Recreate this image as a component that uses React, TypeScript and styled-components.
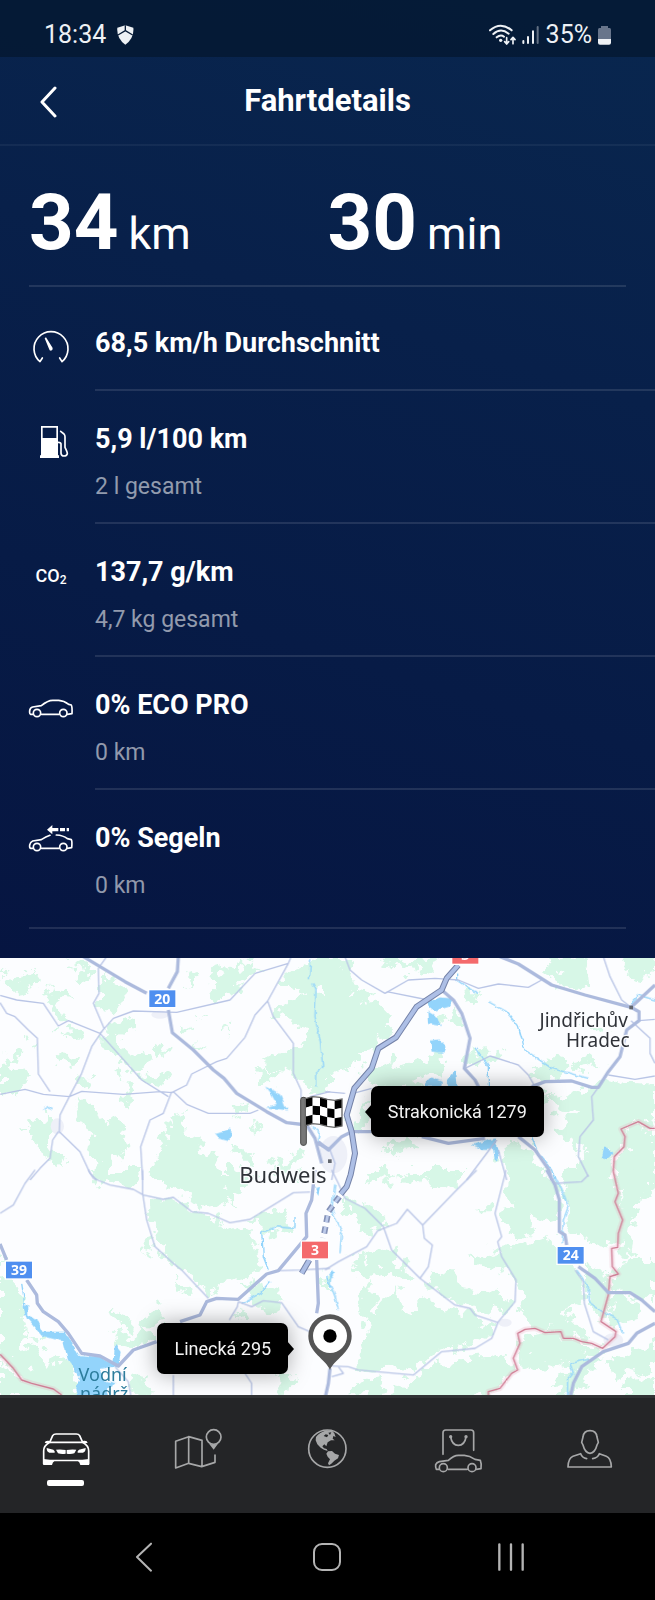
import React from 'react';
import styled, { createGlobalStyle } from 'styled-components';

const GlobalStyle = createGlobalStyle`
  *, *::before, *::after { box-sizing: border-box; }
  body {
    margin: 0;
    background: #000;
    color: #fff;
    font-family: Roboto, "Liberation Sans", sans-serif;
  }
`;

const line = 'rgba(255, 255, 255, 0.11)';

const Screen = styled.div`
  display: flex;
  flex-direction: column;
  min-height: 100vh;
`;

const Sheet = styled.div`
  background: linear-gradient(197deg, #09274f 0%, #08204a 35%, #071b46 65%, #061541 100%);
`;

const StatusBar = styled.div`
  display: flex;
  align-items: center;
  justify-content: space-between;
  height: 57px;
  padding: 13px 44px 0;
  background: rgba(4, 20, 40, 0.6);
  color: #eef1f5;
  font-size: 25px;
  line-height: 28px;
`;

const StatusGroup = styled.div<{ $gap: number }>`
  display: flex;
  align-items: center;
  gap: ${(p) => p.$gap}px;
`;

const Header = styled.header`
  display: grid;
  grid-template-columns: 56px 1fr 56px;
  align-items: center;
  height: 89px;
  padding: 0 20px;
  border-bottom: 2px solid rgba(255, 255, 255, 0.05);
`;

const BackButton = styled.button`
  display: flex;
  align-items: center;
  justify-content: center;
  height: 56px;
  padding: 2px 0 0;
  border: 0;
  background: none;
  color: #fff;
`;

const Title = styled.h1`
  margin: 0;
  font-size: 31px;
  line-height: 36px;
  font-weight: 700;
  text-align: center;
`;

const Summary = styled.section`
  display: grid;
  grid-template-columns: 1fr 1fr;
  margin: 0 29px;
  padding: 31px 0 5px;
  border-bottom: 2px solid ${line};
`;

const Figure = styled.p`
  display: flex;
  align-items: baseline;
  gap: 10px;
  margin: 0;
  font-size: 45px;
  line-height: 92px;
`;

const FigureValue = styled.strong`
  font-size: 78px;
  font-weight: 700;
`;

const DetailList = styled.ul`
  margin: 0;
  padding: 8px 0 0 28px;
  list-style: none;
`;

const DetailRow = styled.li`
  display: grid;
  grid-template-columns: 46px 1fr;
  gap: 21px;
`;

const IconSlot = styled.div`
  display: flex;
  align-items: center;
  justify-content: center;
  height: 40px;
  margin-top: 32px;
`;

const Formula = styled.span`
  font-size: 18px;
  line-height: 20px;
  font-weight: 500;

  sub {
    font-size: 12px;
    line-height: 12px;
    vertical-align: -2px;
  }
`;

const DetailBody = styled.div<{ $divided: boolean; $single: boolean }>`
  display: flex;
  flex-direction: column;
  gap: 17px;
  padding: 32px 0 ${(p) => (p.$single ? 30 : p.$divided ? 20 : 26)}px;
  border-bottom: ${(p) => (p.$divided ? `2px solid ${line}` : '0')};
`;

const DetailTitle = styled.h2`
  margin: 0;
  font-size: 27px;
  line-height: 32px;
  font-weight: 700;
`;

const DetailNote = styled.p`
  margin: 0;
  color: rgba(255, 255, 255, 0.56);
  font-size: 23px;
  line-height: 30px;
`;

const SheetEnd = styled.hr`
  height: 2px;
  margin: 0 29px;
  border: 0;
  background: ${line};
`;

const SheetFoot = styled.div`
  height: 29px;
`;

const MapView = styled.section`
  position: relative;
  aspect-ratio: 655 / 437;
  overflow: hidden;
`;

const MapDrawing = styled.svg`
  display: block;
  width: 100%;
  height: 100%;
`;

const Callout = styled.div<{ $side: 'left' | 'right' }>`
  position: absolute;
  top: ${(p) => (p.$side === 'left' ? '29.3%' : '83.5%')};
  ${(p) => (p.$side === 'left' ? 'left: 56.6%;' : 'right: 56%;')}
  padding: 0 17px;
  border-radius: 7px;
  background: #000;
  color: #f2f2f2;
  font-size: 18px;
  line-height: 51px;
  white-space: nowrap;
  box-shadow: 0 0 22px rgba(0, 0, 0, 0.35);

  &::after {
    content: '';
    position: absolute;
    top: 18px;
    ${(p) => (p.$side === 'left' ? 'left: -6px;' : 'right: -6px;')}
    border: solid transparent;
    border-width: 8px 0;
    ${(p) => (p.$side === 'left' ? 'border-right: 7px solid #000;' : 'border-left: 7px solid #000;')}
  }
`;

const TabBar = styled.nav`
  display: flex;
  height: 118px;
  border-top: 3px solid #303234;
  background: #242527;
`;

const Tab = styled.button<{ $active?: boolean }>`
  display: flex;
  flex: 1;
  flex-direction: column;
  align-items: center;
  gap: 5px;
  padding: 27px 0 0;
  border: 0;
  background: none;
  color: ${(p) => (p.$active ? '#fff' : '#a6a7a8')};

  &::after {
    content: '';
    width: 37px;
    height: 6px;
    border-radius: 2px;
    background: ${(p) => (p.$active ? '#fff' : 'transparent')};
  }
`;

const SystemBar = styled.nav`
  display: flex;
  flex: 1;
  align-items: center;
  justify-content: center;
  min-height: 87px;
`;

const SystemButton = styled.button`
  display: flex;
  justify-content: center;
  width: 28%;
  padding: 8px 0;
  border: 0;
  background: none;
  color: #b4b4b4;
`;

const stroke = (width: number) => ({
  fill: 'none',
  stroke: 'currentColor',
  strokeWidth: width,
  strokeLinecap: 'round' as const,
  strokeLinejoin: 'round' as const,
});

/* Row icons share a 46x40 box, drawn at three units per pixel. */
const RowIcon = ({ y, children }: { y: number; children: React.ReactNode }) => (
  <svg width="46" height="40" viewBox={`84 ${y} 138 120`} aria-hidden="true">
    {children}
  </svg>
);

const SpeedIcon = () => (
  <RowIcon y={83}>
    <g {...stroke(5)}>
      <path d="M127 176 L120 187 A51 51 0 1 1 186 187 L179 176" />
    </g>
    <path d="M134 117 L138 114 L158 146 Q159 153 153 154 Q148 154 147 148Z" fill="currentColor" />
  </RowIcon>
);

const FuelIcon = () => (
  <RowIcon y={371}>
    <path d="M123 380H174V468H177V476H120V468H123ZM128 385V416H169V385Z" fill="currentColor" fillRule="evenodd" />
    <path d="M182 396 L192 404 Q195 407 195 412 V444 Q202 458 202 463 Q200 470 192 470 Q184 470 183 462 V434 Q183 429 175 429" {...stroke(5)} />
  </RowIcon>
);

const CarIcon = () => (
  <RowIcon y={178}>
    <g {...stroke(5)}>
      <path d="M99 254 H92 Q88 253 89 243 Q90 234 98 232 L124 228 Q143 212 158 212 H176 Q192 213 206 224 L214 226 Q217 232 216 252 L202 254 M124 254 H177" />
      <circle cx="111" cy="250" r="11" />
      <circle cx="190" cy="250" r="11" />
    </g>
  </RowIcon>
);

const CoastIcon = () => (
  <RowIcon y={578}>
    <g {...stroke(5)}>
      <path d="M99 657 H92 Q88 656 89 647 Q91 638 98 635 L124 631 Q138 622 150 618 M169 617 Q190 618 202 628 L214 631 Q217 636 215 655 L202 657 M124 657 H177" />
      <circle cx="111" cy="653" r="11" />
      <circle cx="190" cy="653" r="11" />
    </g>
    <path d="M141 601 L157 587 V596 H175 V606 H157 V615Z M180 596H195V606H180Z M200 596H207V606H200Z" fill="currentColor" />
  </RowIcon>
);

interface Detail {
  title: string;
  note?: string;
  icon: React.ReactNode;
}

const details: Detail[] = [
  { title: '68,5 km/h Durchschnitt', icon: <SpeedIcon /> },
  { title: '5,9 l/100 km', note: '2 l gesamt', icon: <FuelIcon /> },
  { title: '137,7 g/km', note: '4,7 kg gesamt', icon: <Formula>CO<sub>2</sub></Formula> },
  { title: '0% ECO PRO', note: '0 km', icon: <CarIcon /> },
  { title: '0% Segeln', note: '0 km', icon: <CoastIcon /> },
];

const ShieldIcon = () => (
  <svg width="17" height="20" viewBox="0 0 51 60" aria-hidden="true">
    <path d="M25 1 L49 8 Q52 40 25 59 Q-2 40 1 8Z" fill="#eef1f5" />
    <path d="M25 1 V17 M25 17 L3 30 M25 17 L47 30" fill="none" stroke="#0a1d38" strokeWidth="4" />
  </svg>
);

const WifiIcon = () => (
  <svg width="27" height="22" viewBox="17 27 81 66" aria-hidden="true">
    <path d="M20 46 Q52 18 85 46 M30 57 Q52 37 76 56 M40 67 Q52 57 62 65" {...stroke(6)} />
    <circle cx="52" cy="76" r="5" fill="currentColor" />
    <path d="M70 68 V86 M64 80 L70 87 L76 80 M89 86 V68 M83 74 L89 67 L95 74" {...stroke(5)} />
  </svg>
);

const SignalIcon = () => (
  <svg width="18" height="18" viewBox="114 33 54 54" aria-hidden="true">
    <path d="M118 78V84 M132 66V84 M147 49V84" {...stroke(6)} />
    <path d="M161 36V84" {...stroke(6)} opacity="0.4" />
  </svg>
);

const BatteryIcon = () => (
  <svg width="13" height="19" viewBox="354 33 39 57" aria-hidden="true">
    <path d="M363 33H384V39H389Q393 39 393 44V72H354V44Q354 39 358 39H363Z" fill="#68758b" />
    <path d="M354 72H393V83Q393 89 387 89H360Q354 89 354 83Z" fill="currentColor" />
  </svg>
);

const TabIcon = ({ box, children }: { box: string; children: React.ReactNode }) => (
  <svg width="52" height="50" viewBox={`${box} 156 150`} aria-hidden="true">
    {children}
  </svg>
);

const VehicleTabIcon = () => (
  <TabIcon box="118 90">
    <path d="M147 142 L156 122 Q159 117 166 117 H227 Q234 117 237 122 L246 142" {...stroke(5)} />
    <path d="M147 142 H246 M147 142 Q129 152 129 168 V206 M246 142 Q264 152 264 168 V206" {...stroke(5)} />
    <path d="M132 144 Q133 136 143 137 L149 139 L145 145Z M261 144 Q260 136 250 137 L244 139 L248 145Z" fill="currentColor" />
    <path d="M138 159 L158 164 Q164 168 162 173 H146 Q138 171 138 159Z M255 159 L235 164 Q229 168 231 173 H247 Q255 171 255 159Z" fill="currentColor" />
    <path d="M166 164 Q180 162 195 165 V176 Q182 178 172 175Z M198 165 Q213 162 227 164 L221 175 Q211 178 198 176Z" fill="currentColor" />
    <path d="M128 192 L148 194 H245 L265 192 V210 H239 Q237 201 232 199 H161 Q156 201 154 210 H128Z" fill="currentColor" />
  </TabIcon>
);

const MapTabIcon = () => (
  <TabIcon box="514 90">
    <path d="M528 219 V139 L567 125 L607 136 M528 219 L567 205 L606 215 L646 202 V180 M567 125 V205 M607 136 V215" {...stroke(5)} />
    <circle cx="642" cy="126" r="22" {...stroke(5)} />
    <path d="M627 145 Q642 152 656 145 L642 164Z" fill="currentColor" />
  </TabIcon>
);

const GlobeTabIcon = () => (
  <TabIcon box="66 75">
    <circle cx="142" cy="146" r="56" {...stroke(5)} />
    <path
      fill="currentColor"
      d="M108 111 Q118 97 140 91 L157 93 L163 100 L167 111 L160 108 L158 116 L164 121 L153 121 L143 127 L139 139 L133 133 L127 139 L132 145 L140 147 L143 153 L132 149 L122 143 L112 133 L107 121Z M137 103 L131 108 L141 112 L145 105Z M145 98 L150 105 L154 97Z"
      fillRule="evenodd"
    />
    <path fill="currentColor" d="M144 154 L156 153 L165 161 L177 165 L174 175 L163 182 L154 191 L147 196 L144 190 L150 178 L143 170 L139 161Z" />
  </TabIcon>
);

const ShopTabIcon = () => (
  <TabIcon box="324 90">
    <g {...stroke(5)}>
      <path d="M354 178 V113 Q354 105 362 105 H438 Q446 105 446 113 V166" />
      <path d="M377 126 Q381 151 400 151 Q419 151 423 126" />
      <path d="M342 223 H334 Q331 218 332 209 Q335 202 343 200 L370 196 Q386 181 400 181 H418 Q434 182 450 193 L466 196 Q470 205 468 221 L454 223 M369 223 H427" />
      <circle cx="355" cy="218" r="12" />
      <circle cx="441" cy="218" r="12" />
    </g>
    <circle cx="377" cy="125" r="5" fill="currentColor" />
    <circle cx="423" cy="125" r="5" fill="currentColor" />
  </TabIcon>
);

const ProfileTabIcon = () => (
  <TabIcon box="717 90">
    <g {...stroke(5)}>
      <path d="M795 107 Q776 107 774 126 L770 142 L774 150 Q780 174 795 175 Q810 174 816 150 L820 142 L816 126 Q814 107 795 107Z" />
      <path d="M785 191 Q771 188 767 176 L744 184 Q730 189 729 216 H859 Q858 189 844 184 L823 176 Q819 188 803 191" />
    </g>
  </TabIcon>
);

const tabs = [
  { label: 'Fahrzeug', icon: <VehicleTabIcon /> },
  { label: 'Karte', icon: <MapTabIcon /> },
  { label: 'Entdecken', icon: <GlobeTabIcon /> },
  { label: 'Shop', icon: <ShopTabIcon /> },
  { label: 'Profil', icon: <ProfileTabIcon /> },
];

/* The map is described in four quadrants, three units per pixel. */
interface Quadrant {
  x: number;
  y: number;
  forest: string;
  minor: string;
  major: string;
  water: string;
  river: string;
}

const quadrants: Quadrant[] = [
  {
    x: 0,
    y: -24,
    forest:
      'M15 110L60 75L95 65L120 95L80 110L30 120Z M205 30L250 40L290 60L270 80L230 95L250 68L215 50Z M300 100L330 80L375 110L380 140L350 165L330 185L300 170Z M130 125L170 110L205 135L175 160L200 185L180 230L160 210L165 170L140 155Z M195 235L215 225L240 260L225 270Z M555 60L575 55L582 110L572 125L558 115Z M630 80L700 60L720 20L765 20L750 50L800 62L770 78L710 110L690 135L655 150L635 130Z M850 80L900 45L930 20L990 20V100L945 110L990 150V400L950 425L900 400L880 360L830 380L800 340L845 295L900 290L940 240L870 220L810 190L870 170L900 120L845 110Z M310 225L350 200L385 215L390 250L350 258L380 300L440 310L460 340L400 368L370 330L340 300L310 280Z M160 320L235 325L225 350L175 348Z M0 320H20L40 360L100 385L70 400L60 430L0 425Z M420 375L500 370L490 410L440 395Z M240 380L265 385L260 420L240 410Z M350 365L388 370L380 388L355 384Z M95 505L150 500V590L205 630L155 655L120 600L90 545Z M215 455L260 450L300 510L385 530L360 570L390 600L330 630L340 680L280 700L290 640L270 590L280 540L225 495Z M500 500L540 490L555 540L600 560L590 600L650 640L640 700H470L455 650L500 580L490 540Z M700 585L725 590L770 640L750 650L715 620Z M760 350L800 355L830 380L790 400Z M380 400L405 400L388 470L372 460Z M820 640L900 600L910 625L840 665Z M20 310L60 315L50 332L25 328Z M585 270L620 295L600 302Z M540 225L575 235L555 250Z M470 290L510 300L480 325Z M590 198L622 200L600 206Z M655 235L688 230L680 260L668 240Z M695 470L730 465L735 490L705 500Z M755 510L785 525L778 545Z M75 280L112 275L100 300Z M45 545L80 540L65 556Z M0 60L20 55L0 90Z',
    minor:
      'M0 136L50 150L130 160L150 190L175 228L205 212L300 250 M0 158L20 190L45 200L85 240L112 265L115 372L150 425 M0 433L75 418L130 433L208 440L245 424L370 433L480 425L515 428L560 405L575 372L650 335L680 325L735 262L765 195L803 153L865 40 M803 153L820 200L880 280V370L903 420V445 M320 20L295 55L297 130L280 160L312 235L275 290L245 370L208 440L180 495L178 545L240 605L270 670L290 690 M300 250L340 205L400 183L530 187L690 150L765 70L865 40L872 24 M300 250L425 390L505 440 M520 425L560 463L625 490H750L775 480 M515 425L490 490L450 510L422 590L428 690 M175 545L158 570L150 625L120 655L90 690 M930 440L990 425 M975 500L990 480',
    major:
      'M250 20L300 50L375 95L440 130 M535 20L532 65L505 115 M505 180L517 248L580 300L640 360L672 385L710 430L800 485L860 518L920 525L945 565L965 640 M945 575L990 600',
    water:
      'M795 410L840 430L855 468L865 482L800 472L830 462L815 435Z M645 552L670 545L690 535L692 560L685 573L655 565Z',
    river: 'M938 100L948 120L945 200L962 280L968 350L950 365V410 M932 24L928 90 M130 478L145 470L158 476 M935 530L960 550L955 580',
  },
  {
    x: 975,
    y: -24,
    forest:
      'M0 20H55L70 60L95 110L75 130L150 150L170 190L210 190L200 230L160 270L150 300L110 300L95 350L40 365L0 370Z M150 20H200L240 40L340 22L320 75L260 60L200 55Z M350 220L385 160L400 200L380 230Z M420 115L455 120L460 150L425 180L415 140Z M670 20H770L795 60L800 110L740 120L690 100L650 70L700 60Z M890 20H990V60L940 90L900 60Z M110 360L180 330L240 350L340 305L360 350L340 385L280 395L250 420L140 400Z M85 500L130 440L140 520L110 545L80 530Z M425 290L450 310L520 300L535 330L470 335L430 350Z M620 370L690 320L725 325L700 380L640 392Z M780 230L835 240L820 262L790 252Z M660 440L760 425L800 400L860 385L880 400L990 405V530L940 515L890 540L895 580L860 620V700H790L770 660L780 610L730 570L700 530L750 500L690 480Z M870 625L897 590L892 545L940 518L990 540V700H870Z M580 570L620 600L665 700H545L530 610Z M180 580L290 570L260 600L190 610Z M740 330L800 325L830 350L760 360Z M940 440L990 440V480L950 470Z',
    minor:
      'M60 20L75 60L110 90L180 130L250 90L330 85L400 90L460 115L520 102L610 112L650 90 M185 125L310 150 M835 20L855 80L890 150L918 172 M420 355L495 318L580 345L610 375L630 410 M918 212L975 265V310L990 340 M942 212L990 208 M850 375L930 388L990 378 M820 412L800 440L805 510L765 560L760 620L790 680 M85 430L140 415 M0 425L60 430 M515 570L425 690 M520 600L545 690 M15 600L30 640L20 690',
    major:
      'M525 20L580 42L680 105L780 135L918 172L990 105 M918 172L942 185V212L905 240L885 320L850 365L820 412H800L740 393L660 395L620 410 M350 120L385 150L410 190L435 265L418 355L450 390L470 430 M80 545H140 M290 560L370 580L480 565 M80 545L50 560L10 600L-20 575 M580 560L630 600L672 660L680 690',
    water:
      'M310 155L345 142L385 145L370 170L330 182L315 172Z M310 185L335 200L348 228L312 222Z M315 272L340 268L362 290L355 308L320 305Z M300 400L320 382L350 395V410H300Z M365 395L390 362L395 410H370Z M440 585L510 565L525 610L510 635L505 600L470 600Z M838 592L870 610L845 630L830 625Z',
    river: 'M395 70V90L440 120L460 130 M490 155L545 185L580 230L600 300L680 355L790 385 M450 290L490 350V410 M620 560L640 610L680 660L690 690 M915 160L940 135L990 150',
  },
  {
    x: 0,
    y: 636,
    forest:
      'M0 320L50 340L75 390L65 430L90 480L60 510L130 560L150 600L185 675L90 640L60 610L0 550Z M0 570L60 630L180 670L190 690H0Z M130 570L200 560L235 620L230 690H190L150 610Z M265 0H425L410 50L300 32Z M440 85L540 100L580 130L630 140L700 170L760 200L790 260L770 310L700 330L620 380L580 330L520 280L470 220L450 150Z M480 0H700L760 30L730 60L690 70L720 120L650 90L600 120L560 70L490 50Z M740 150L800 130L850 120L870 180L800 200L780 180Z M340 420L380 430L400 480L360 470Z M425 430L475 415L490 455L440 472Z M530 335L570 345L575 372L545 370Z M340 490L400 490L450 470L460 510L400 535L350 520Z M720 345L790 330L830 350L860 400L810 430L760 390Z M835 615L870 610L865 680L835 665Z M390 610L450 620L440 680L400 670Z M425 200L455 190V240L425 250Z M700 430L740 440L730 470Z M80 495L130 505L120 530Z M20 260L0 250V300Z M860 10L900 20L880 50Z M960 320L990 310V370Z',
    minor:
      'M0 130L40 105L75 40L105 0 M265 0L280 25L330 45L400 58L430 75L490 88L520 82L575 125L625 130L690 158L750 148L880 68L930 66 M428 0V70L440 150L465 230L520 280L545 300L625 385 M835 302L900 300L990 295 M715 395L755 410L790 392L845 398L895 470L930 485 M715 395L712 410L688 450 M520 615V690 M735 610L755 640V690 M345 590L385 635L395 690',
    major:
      'M0 222L20 270 M80 330L110 375L112 400L130 425L175 455L205 490L245 550L300 558L355 588L400 540L470 515 M540 455L600 435L620 395L650 385L715 388L800 312L835 302L920 200L918 130L935 90L945 0 M950 270L955 400L950 430',
    water:
      'M70 410L85 405V435L115 455L130 485H195L215 520L235 555L300 560L340 580L345 525L362 545L355 590L300 600L310 630L350 640L320 655L330 690H235L225 655L240 620L205 575L190 515L125 497L80 445Z M945 55L960 50L955 75Z',
    river: 'M780 190L830 170L885 175V140 M785 185L790 260L805 300 M725 400L780 370L810 335 M65 340L75 410 M980 320L990 350',
  },
  {
    x: 975,
    y: 636,
    forest:
      'M120 0H190L205 25L160 40L130 25Z M215 20L240 0H430L400 30L370 60L290 30L250 50Z M545 0H660L690 60L700 140L640 150L560 100L540 60Z M725 0H860L885 80L890 180L875 225L830 220L760 190L725 180L740 110L700 60Z M60 90L130 110L180 150L130 190L60 130Z M440 255L540 230L690 205L740 290L770 330V390L720 420L800 510L740 500L650 480L590 440L580 360L560 320L470 290Z M530 120L600 100L630 170L600 200L540 190Z M780 290L860 320L850 400L830 450L780 400Z M870 320L880 290L920 270L990 270V390L920 370L860 365Z M855 380L930 380L960 420L900 460L880 480L840 450Z M80 270L200 240L270 320L260 345L180 305L100 310Z M290 330L370 300L420 360L540 370L560 400L500 440L440 410L380 395Z M90 380L130 320L155 420L210 360L250 440L300 380L350 420L440 430L510 470L490 500L360 540L300 560L270 610L200 600L90 590L130 480Z M300 600L400 570L540 560L570 590L520 650L480 685H180L240 640Z M100 640L180 620L170 685H60Z M470 115H490L495 130H470Z M890 60L930 0L990 10V60L940 90L920 260L880 260Z M850 565L990 520V600L930 620L860 600Z M900 640L990 630V685H900Z M740 560L830 560L790 610L760 685H690Z M580 500L700 490L830 540L720 580L590 600Z',
    minor:
      'M0 300L40 275L125 230L158 182L215 160L247 118L293 165L390 65L455 0 M293 165L298 205L322 225L310 290L285 325 M60 85L120 115L175 170L200 240L285 325L390 405L435 415L450 435L520 458 M543 0L510 130L530 200L518 215L530 260L573 330L570 395L520 455L500 505L450 535L350 545L265 615L100 600L70 590L20 588 M690 40L770 35L790 15 M750 300L775 335L778 400L805 485L850 510 M40 590L55 610L20 620 M20 0L40 40L60 85',
    major:
      'M665 0L690 45L703 90V185L720 195L725 225 M760 290L810 325L850 368H915L950 390L990 425 M990 460L935 490L910 520L835 545L770 590L745 640L735 685 M15 595L10 640L0 685',
    water: 'M20 300L30 310L22 325L12 318Z',
    river: 'M685 25L710 55L730 110L715 150L712 220 M755 300L790 350V395L840 430L875 445L893 490 M20 300L15 340L30 380L40 420 M790 568L735 580L745 610L728 630V680 M30 40L20 120L50 185L45 250',
  },
];

const border =
  'M1965 511L1950 511L1915 491L1863 513L1875 536L1872 566L1843 596L1840 640L1855 706L1845 731L1868 786L1855 826L1853 868L1835 871L1837 926L1855 948L1830 956L1825 1011L1803 1091L1848 1121L1845 1136L1808 1171L1775 1156L1745 1151L1720 1141L1690 1141L1683 1121L1635 1124L1605 1111L1575 1114L1553 1126L1560 1156L1540 1201L1553 1236L1535 1246L1500 1291L1465 1301V1316 M0 1189L40 1231L65 1266L95 1276L160 1293L185 1311';

const motorway =
  'M1375 21L1340 61L1325 96L1250 146L1188 238L1135 271L1115 331L1063 391L1040 471L1055 521L1065 586L1052 650L1040 686L1022 708';

const flagColumns = [0, 1, 2, 3, 4];
const flagWave = [0, -6, -4, 2, 5, 1];

const RoadShield = ({ x, y, color, label }: { x: number; y: number; color: string; label: string }) => (
  <g transform={`translate(${x} ${y})`}>
    <rect x="-41" y="-27" width="82" height="54" fill={color} stroke="#fff" strokeWidth="4" />
    <text y="15" textAnchor="middle" fontSize="42" fontWeight="700" fill="#fff">
      {label}
    </text>
  </g>
);

const TripMap = () => (
  <MapDrawing viewBox="0 0 1965 1311" preserveAspectRatio="xMidYMid slice" fontFamily='"Noto Sans", sans-serif' role="img" aria-label="Karte der Fahrt">
    <defs>
      <filter id="coast" x="0" y="0" width="100%" height="100%">
        <feTurbulence type="fractalNoise" baseFrequency="0.024" numOctaves="4" seed="4" />
        <feDisplacementMap in="SourceGraphic" scale="84" xChannelSelector="R" yChannelSelector="G" />
      </filter>
      <filter id="shore" x="0" y="0" width="100%" height="100%">
        <feTurbulence type="fractalNoise" baseFrequency="0.05" numOctaves="2" seed="9" />
        <feDisplacementMap in="SourceGraphic" scale="14" xChannelSelector="R" yChannelSelector="G" />
      </filter>
    </defs>
    <rect width="1965" height="1311" fill="#fcfdff" />
    <g filter="url(#coast)" fill="#d7f7e7">
      <rect width="1965" height="1311" fill="none" />
      {quadrants.map((q, i) => (
        <path key={i} d={q.forest} transform={`translate(${q.x} ${q.y})`} />
      ))}
    </g>
    <g fill="#eef0f8">
      <ellipse cx="1000" cy="590" rx="42" ry="56" />
      <ellipse cx="480" cy="170" rx="26" ry="12" />
      <ellipse cx="172" cy="505" rx="20" ry="24" />
      <ellipse cx="1840" cy="1146" rx="30" ry="20" />
      <ellipse cx="1515" cy="1094" rx="20" ry="12" />
    </g>
    <g filter="url(#shore)">
      {quadrants.map((q, i) => (
        <g key={i} transform={`translate(${q.x} ${q.y})`}>
          <path d={q.water} fill="#93d4fb" />
          <path d={q.river} fill="none" stroke="#93d4fb" strokeWidth="4" />
        </g>
      ))}
    </g>
    <g fill="none" strokeLinejoin="round">
      <path d={border} stroke="#e8a5b6" strokeWidth="16" opacity="0.25" />
      <path d={border} stroke="#cf7c94" strokeWidth="4" />
      {quadrants.map((q, i) => (
        <path key={i} d={q.minor} transform={`translate(${q.x} ${q.y})`} stroke="#b9c5e6" strokeWidth="4" />
      ))}
      {quadrants.map((q, i) => (
        <path key={i} d={q.major} transform={`translate(${q.x} ${q.y})`} stroke="#acbadd" strokeWidth="10" />
      ))}
      <path d={motorway} stroke="#7482a8" strokeWidth="18" />
      <path d={motorway} stroke="#adbfe6" strokeWidth="12" />
      <path d="M1018 716L985 761L970 840" stroke="#8492b8" strokeWidth="18" strokeDasharray="20 14" />
      <path d="M1018 716L985 761L970 840" stroke="#bccaea" strokeWidth="8" strokeDasharray="20 14" />
      <path d="M928 906L905 946" stroke="#7482a8" strokeWidth="18" />
      <path d="M928 906L905 946" stroke="#adbfe6" strokeWidth="12" />
    </g>
    <g fill="#62666e">
      <rect x="984" y="604" width="11" height="11" />
      <rect x="1888" y="143" width="11" height="11" />
    </g>
    <g fill="#2f3238" stroke="#fcfdff" strokeWidth="8" paintOrder="stroke" strokeLinejoin="round">
      <text x="1884" y="208" fontSize="57" textAnchor="end">Jindřichův</text>
      <text x="1889" y="266" fontSize="57" textAnchor="end">Hradec</text>
      <text x="980" y="674" fontSize="66" textAnchor="end">Budweis</text>
    </g>
    <g fill="#2c7c9c">
      <text x="308" y="1269" fontSize="54" textAnchor="middle">Vodní</text>
      <text x="312" y="1326" fontSize="54" textAnchor="middle">nádrž</text>
    </g>
    <RoadShield x={487} y={122} color="#4f8ff0" label="20" />
    <RoadShield x={57} y={936} color="#4f8ff0" label="39" />
    <RoadShield x={1712} y={892} color="#4f8ff0" label="24" />
    <RoadShield x={945} y={876} color="#f46a6c" label="3" />
    <RoadShield x={1396} y={-8} color="#f46a6c" label="3" />
    <g>
      <rect x="902" y="418" width="17" height="144" rx="7" fill="#777" stroke="#4a4a4a" strokeWidth="3" />
      {flagColumns.map((c) =>
        [0, 1, 2].map((r) => {
          const x = 916 + c * 22;
          const top = 422 + r * 27;
          const a = top + flagWave[c];
          const b = top + flagWave[c + 1];
          return (
            <path
              key={`${c}-${r}`}
              d={`M${x} ${a}L${x + 22} ${b}V${b + 27}L${x} ${a + 27}Z`}
              fill={(c + r) % 2 ? '#fff' : '#000'}
            />
          );
        }),
      )}
      <path d="M916 422L938 416L960 418L982 424L1004 427L1026 423V504L1004 508L982 505L960 499L938 497L916 503Z" fill="none" stroke="#666" strokeWidth="4" />
    </g>
    <g>
      <path d="M990 1236 C978 1204 925 1184 925 1134 A65 65 0 0 1 1055 1134 C1055 1184 1002 1204 990 1236Z" fill="#555" />
      <circle cx="990" cy="1134" r="51" fill="#fff" />
      <circle cx="990" cy="1134" r="20" fill="#000" />
    </g>
  </MapDrawing>
);

export default function App() {
  return (
    <>
      <GlobalStyle />
      <Screen>
        <Sheet>
          <StatusBar>
            <StatusGroup $gap={11}>
              <span>18:34</span>
              <ShieldIcon />
            </StatusGroup>
            <StatusGroup $gap={6}>
              <WifiIcon />
              <SignalIcon />
              <span>35%</span>
              <BatteryIcon />
            </StatusGroup>
          </StatusBar>
          <Header>
            <BackButton aria-label="Zurück">
              <svg width="20" height="32" viewBox="0 0 20 32" aria-hidden="true">
                <path d="M17 2 L4 16 L17 30" {...stroke(3)} />
              </svg>
            </BackButton>
            <Title>Fahrtdetails</Title>
          </Header>
          <main>
            <Summary>
              <Figure>
                <FigureValue>34</FigureValue>
                <span>km</span>
              </Figure>
              <Figure>
                <FigureValue>30</FigureValue>
                <span>min</span>
              </Figure>
            </Summary>
            <DetailList>
              {details.map((d, i) => (
                <DetailRow key={d.title}>
                  <IconSlot>{d.icon}</IconSlot>
                  <DetailBody $divided={i < details.length - 1} $single={!d.note}>
                    <DetailTitle>{d.title}</DetailTitle>
                    {d.note && <DetailNote>{d.note}</DetailNote>}
                  </DetailBody>
                </DetailRow>
              ))}
            </DetailList>
            <SheetEnd />
            <SheetFoot />
          </main>
        </Sheet>
        <MapView>
          <TripMap />
          <Callout $side="left">Strakonická 1279</Callout>
          <Callout $side="right">Linecká 295</Callout>
        </MapView>
        <TabBar>
          {tabs.map((t, i) => (
            <Tab key={t.label} $active={i === 0} aria-label={t.label}>
              {t.icon}
            </Tab>
          ))}
        </TabBar>
        <SystemBar>
          <SystemButton aria-label="Zurück">
            <svg width="30" height="30" viewBox="387 439 90 90" aria-hidden="true">
              <path d="M453 444 L411 484 L453 525" {...stroke(6)} />
            </svg>
          </SystemButton>
          <SystemButton aria-label="Startbildschirm">
            <svg width="30" height="30" viewBox="0 0 90 90" aria-hidden="true">
              <rect x="6" y="6" width="78" height="78" rx="24" {...stroke(6)} />
            </svg>
          </SystemButton>
          <SystemButton aria-label="Letzte Apps">
            <svg width="30" height="30" viewBox="0 0 90 90" aria-hidden="true">
              <path d="M10 7 V83 M45 7 V83 M80 7 V83" {...stroke(7)} />
            </svg>
          </SystemButton>
        </SystemBar>
      </Screen>
    </>
  );
}
